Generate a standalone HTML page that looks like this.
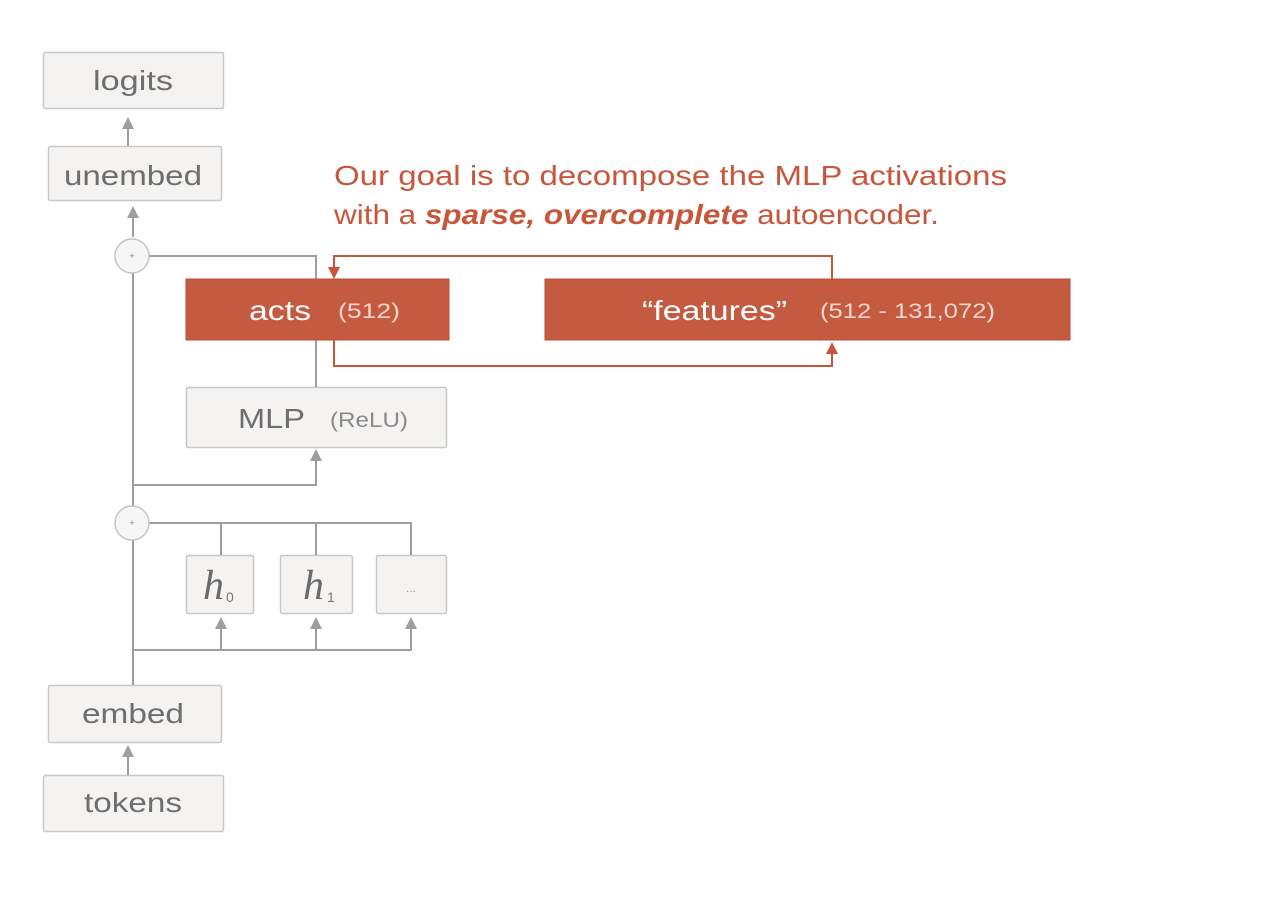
<!DOCTYPE html>
<html><head><meta charset="utf-8"><style>
html,body{margin:0;padding:0;background:#fff;}
svg{display:block;}
text{font-family:"Liberation Sans",sans-serif;}
</style></head><body>
<svg width="1272" height="914" viewBox="0 0 1272 914" xmlns="http://www.w3.org/2000/svg">
<g fill="#f4f3f2" stroke="#c8c8c8" stroke-width="1.5">
<rect x="43.5" y="52.5" width="180" height="56" rx="2"/>
<rect x="48.5" y="146.5" width="173" height="54" rx="2"/>
<rect x="186.5" y="387.5" width="260" height="60" rx="2"/>
<rect x="186.5" y="555.5" width="67" height="58" rx="2"/>
<rect x="280.5" y="555.5" width="72" height="58" rx="2"/>
<rect x="376.5" y="555.5" width="70" height="58" rx="2"/>
<rect x="48.5" y="685.5" width="173" height="57" rx="2"/>
<rect x="43.5" y="775.5" width="180" height="56" rx="2"/>
</g>
<g stroke="#9e9e9e" stroke-width="2" fill="none">
<path d="M128 128 L128 146"/>
<line x1="133" y1="237" x2="133" y2="215"/>
<line x1="133" y1="273" x2="133" y2="506"/>
<line x1="133" y1="540" x2="133" y2="685"/>
<path d="M149 256 H316 V279"/>
<path d="M316 340 V387"/>
<path d="M133 485 H316 V460"/>
<path d="M149 523 H411 V555"/>
<path d="M221 523 V555 M316 523 V555"/>
<path d="M133 650 H411 V628 M221 650 V628 M316 650 V628"/>
<line x1="128" y1="775" x2="128" y2="757"/>
</g>
<g fill="#9e9e9e">
<path d="M122 129 L128 117 L134 129Z"/>
<path d="M127 218 L133 206 L139 218Z"/>
<path d="M310 461 L316 449 L322 461Z"/>
<path d="M215 629 L221 617 L227 629Z"/>
<path d="M310 629 L316 617 L322 629Z"/>
<path d="M405 629 L411 617 L417 629Z"/>
<path d="M122 757 L128 745 L134 757Z"/>
</g>
<g fill="#f6f6f6" stroke="#c4c4c4" stroke-width="1.5">
<circle cx="132" cy="256" r="17"/>
<circle cx="132" cy="523" r="17"/>
</g>
<text x="132" y="259" font-size="9" fill="#888" text-anchor="middle">+</text>
<text x="132" y="526" font-size="9" fill="#888" text-anchor="middle">+</text>
<rect x="186" y="279" width="263" height="61" fill="#c45a3f" stroke="#b85038" stroke-width="1"/>
<rect x="545" y="279" width="525" height="61" fill="#c45a3f" stroke="#b85038" stroke-width="1"/>
<g stroke="#c8563a" stroke-width="2" fill="none">
<path d="M334 270 V256 H832 V279"/>
<path d="M334 340 V366 H832 V353"/>
</g>
<g fill="#c8563a">
<path d="M328 267 L334 279 L340 267Z"/>
<path d="M826 354 L832 342 L838 354Z"/>
</g>
<g fill="#6e6e6e" font-size="28" text-anchor="middle">
<text x="133" y="90" textLength="80" lengthAdjust="spacingAndGlyphs">logits</text>
<text x="133" y="185" textLength="138" lengthAdjust="spacingAndGlyphs">unembed</text>
<text x="133" y="723" textLength="102" lengthAdjust="spacingAndGlyphs">embed</text>
<text x="133" y="812" textLength="98" lengthAdjust="spacingAndGlyphs">tokens</text>
</g>
<text x="238" y="428" font-size="28" fill="#6e6e6e" textLength="67" lengthAdjust="spacingAndGlyphs">MLP</text>
<text x="330" y="427" font-size="21" fill="#8a8a8a" textLength="78" lengthAdjust="spacingAndGlyphs">(ReLU)</text>
<text x="203" y="599" style="font-family:'Liberation Serif',serif;font-style:italic;font-size:42px" fill="#6a6a6a">h</text>
<text x="226" y="602" font-size="14" fill="#777">0</text>
<text x="303" y="599" style="font-family:'Liberation Serif',serif;font-style:italic;font-size:42px" fill="#6a6a6a">h</text>
<text x="327" y="602" font-size="14" fill="#777">1</text>
<text x="411" y="592" font-size="12" fill="#999" text-anchor="middle">...</text>
<text x="249" y="320" font-size="28" fill="#fff" textLength="62" lengthAdjust="spacingAndGlyphs">acts</text>
<text x="338" y="318" font-size="21" fill="#f3d6cc" textLength="62" lengthAdjust="spacingAndGlyphs">(512)</text>
<text x="642" y="320" font-size="28" fill="#fff" textLength="145" lengthAdjust="spacingAndGlyphs">“features”</text>
<text x="820" y="318" font-size="21" fill="#f3d6cc" textLength="175" lengthAdjust="spacingAndGlyphs">(512 - 131,072)</text>
<text x="334" y="185" font-size="28" fill="#c8563a" textLength="673" lengthAdjust="spacingAndGlyphs">Our goal is to decompose the MLP activations</text>
<text x="334" y="224" font-size="28" fill="#c8563a" textLength="605" lengthAdjust="spacingAndGlyphs">with a <tspan font-weight="bold" font-style="italic">sparse, overcomplete</tspan> autoencoder.</text>
</svg>
</body></html>
